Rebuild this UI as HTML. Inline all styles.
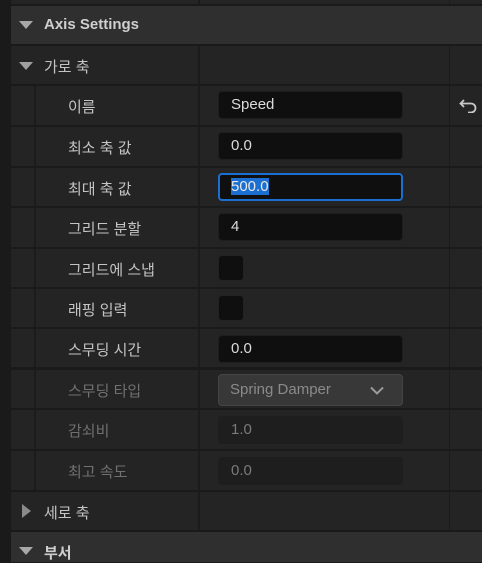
<html><head><style>
body{margin:0;width:482px;height:550px;background:#1a1a1a;position:relative;overflow:hidden;font-family:"Liberation Sans","Noto Sans CJK KR",sans-serif}
.r{position:absolute;left:11px;right:0;background:#242424}
.r .d1{position:absolute;left:187px;top:0;bottom:0;width:2px;background:#1b1b1b}
.r .d2{position:absolute;left:438px;top:0;bottom:0;width:1px;background:#1b1b1b}
.r .ind{position:absolute;left:23px;top:0;bottom:0;width:2px;background:#1c1c1c}
.lbl{position:absolute;left:57px;top:0;bottom:0;display:flex;align-items:center;font-size:15px;color:#c4c4c4;padding-top:2px}
.dis{color:#707070}
.in{position:absolute;left:207px;width:185px;height:28px;background:#0f0f0f;border:1px solid #1e1e1e;border-radius:4px;box-sizing:border-box;color:#dcdcdc;font-size:15px;line-height:26px;padding-left:12px}
.in.dis{background:#1e1e1e;color:#7a7a7a}
.cb{position:absolute;left:207px;width:26px;height:26px;background:#0f0f0f;border:1px solid #222;border-radius:4px;box-sizing:border-box}
.tri{position:absolute;width:0;height:0}
</style></head><body>
<div class="r" style="top:0;height:4px"><div class="d1"></div><div class="d2"></div></div>
<div style="position:absolute;left:11px;right:0;top:6px;height:38px;background:#2f2f2f">
<div class="tri" style="left:8px;top:15px;border-left:7px solid transparent;border-right:7px solid transparent;border-top:8px solid #a8a8a8"></div>
<div style="position:absolute;left:33px;top:10px;font-size:15px;font-weight:bold;color:#cfcfcf">Axis Settings</div></div>

<div class="r" style="top:46px;height:38px"><div class="d1"></div><div class="d2"></div>
<div class="tri" style="left:8px;top:16px;border-left:7px solid transparent;border-right:7px solid transparent;border-top:8px solid #a0a0a0"></div>
<div class="lbl" style="left:33px">가로 축</div></div>

<div class="r" style="top:86px;height:39px"><div class="ind"></div><div class="d1"></div><div class="d2"></div>
<div class="lbl">이름</div><div class="in" style="top:5px">Speed</div>
<svg style="position:absolute;left:448px;top:12px" width="18" height="15" viewBox="0 0 18 15"><path d="M5 2L1.5 5.5L5 9M2 5.5H12A4.5 4.5 0 0 1 12 14.5H9" stroke="#c8c8c8" stroke-width="1.8" fill="none"/></svg></div>

<div class="r" style="top:127px;height:39px"><div class="ind"></div><div class="d1"></div><div class="d2"></div>
<div class="lbl">최소 축 값</div><div class="in" style="top:5px">0.0</div></div>

<div class="r" style="top:168px;height:38px"><div class="ind"></div><div class="d1"></div><div class="d2"></div>
<div class="lbl">최대 축 값</div><div class="in" style="top:5px;border:2px solid #1a6fd0;padding-left:11px;line-height:24px"><span style="background:#1a6fd0;color:#e8e8e8">500.0</span></div></div>

<div class="r" style="top:208px;height:39px"><div class="ind"></div><div class="d1"></div><div class="d2"></div>
<div class="lbl">그리드 분할</div><div class="in" style="top:5px">4</div></div>

<div class="r" style="top:249px;height:38px"><div class="ind"></div><div class="d1"></div><div class="d2"></div>
<div class="lbl">그리드에 스냅</div><div class="cb" style="top:6px"></div></div>

<div class="r" style="top:289px;height:38px"><div class="ind"></div><div class="d1"></div><div class="d2"></div>
<div class="lbl">래핑 입력</div><div class="cb" style="top:6px"></div></div>

<div class="r" style="top:329px;height:38px"><div class="ind"></div><div class="d1"></div><div class="d2"></div>
<div class="lbl">스무딩 시간</div><div class="in" style="top:6px">0.0</div></div>

<div class="r" style="top:370px;height:38px"><div class="ind"></div><div class="d1"></div><div class="d2"></div>
<div class="lbl dis">스무딩 타입</div>
<div class="in" style="top:4px;height:32px;background:#383838;border:1px solid #444;color:#8a8a8a;line-height:30px;padding-left:11px">Spring Damper
<svg style="position:absolute;right:18px;top:11px" width="14" height="9" viewBox="0 0 14 9"><path d="M1 1.5L7 7.5L13 1.5" stroke="#9a9a9a" stroke-width="2" fill="none"/></svg></div></div>

<div class="r" style="top:410px;height:39px"><div class="ind"></div><div class="d1"></div><div class="d2"></div>
<div class="lbl dis">감쇠비</div><div class="in dis" style="top:6px">1.0</div></div>

<div class="r" style="top:451px;height:39px"><div class="ind"></div><div class="d1"></div><div class="d2"></div>
<div class="lbl dis">최고 속도</div><div class="in dis" style="top:6px">0.0</div></div>

<div class="r" style="top:492px;height:38px"><div class="d1"></div><div class="d2"></div>
<div class="tri" style="left:11px;top:12px;border-top:7px solid transparent;border-bottom:7px solid transparent;border-left:9px solid #8a8a8a"></div>
<div class="lbl" style="left:33px">세로 축</div></div>

<div style="position:absolute;left:11px;right:0;top:532px;height:30px;background:#2f2f2f">
<div class="tri" style="left:8px;top:15px;border-left:7px solid transparent;border-right:7px solid transparent;border-top:8px solid #a8a8a8"></div>
<div style="position:absolute;left:33px;top:10px;font-size:15px;font-weight:bold;color:#cfcfcf">부서</div></div>
</body></html>
